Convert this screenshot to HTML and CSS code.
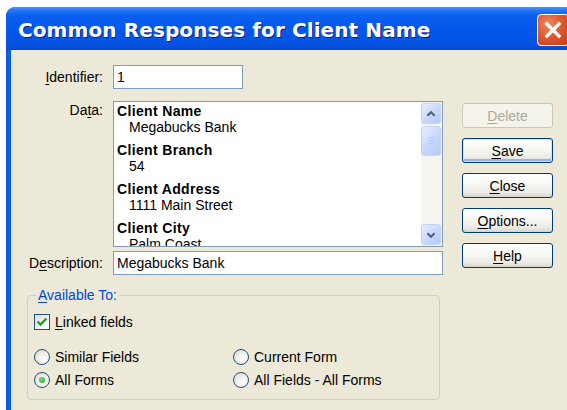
FILE: index.html
```html
<!DOCTYPE html>
<html lang="en">
<head>
<meta charset="utf-8">
<title>Common Responses for Client Name</title>
<link rel="stylesheet" href="styles.css">
</head>
<body>
<div class="window">
  <div class="titlebar">
    <span class="title">Common Responses for Client Name</span>
    <button class="close-box" aria-label="Close">
      <svg viewBox="0 0 32 32" width="32" height="32"><path d="M9.5 9.5 L22.5 22.5 M22.5 9.5 L9.5 22.5" stroke="#fff" stroke-width="3.6" stroke-linecap="square" fill="none"/></svg>
    </button>
  </div>
  <div class="client">
    <div class="top">
      <div class="form">
        <label class="lbl lbl-line"><u>I</u>dentifier:</label>
        <div class="field id-field">1</div>

        <label class="lbl lbl-top">Da<u>t</u>a:</label>
        <div class="listbox">
          <div class="items">
            <div class="item"><div class="key">Client Name</div><div class="val">Megabucks Bank</div></div>
            <div class="item"><div class="key">Client Branch</div><div class="val">54</div></div>
            <div class="item"><div class="key">Client Address</div><div class="val">1111 Main Street</div></div>
            <div class="item"><div class="key">Client City</div><div class="val">Palm Coast</div></div>
          </div>
          <div class="scrollbar">
            <div class="sb-btn">
              <svg viewBox="0 0 20 20" width="20" height="20"><path d="M6 12 L10 8 L14 12" stroke="#4D6185" stroke-width="2.2" fill="none"/></svg>
            </div>
            <div class="sb-thumb">
              <svg viewBox="0 0 20 28" width="20" height="28"><path d="M6.5 10.5 H13.5 M6.5 13.5 H13.5 M6.5 16.5 H13.5" stroke="#B4C7F4" stroke-width="1" fill="none"/></svg>
            </div>
            <div class="sb-track"></div>
            <div class="sb-btn">
              <svg viewBox="0 0 20 20" width="20" height="20"><path d="M6 8 L10 12 L14 8" stroke="#4D6185" stroke-width="2.2" fill="none"/></svg>
            </div>
          </div>
        </div>

        <label class="lbl lbl-line">D<u>e</u>scription:</label>
        <div class="field desc-field">Megabucks Bank</div>
      </div>

      <div class="buttons">
        <button class="btn disabled"><u>D</u>elete</button>
        <button class="btn default"><u>S</u>ave</button>
        <button class="btn"><u>C</u>lose</button>
        <button class="btn"><u>O</u>ptions...</button>
        <button class="btn"><u>H</u>elp</button>
      </div>
    </div>

    <fieldset class="group">
      <legend><u>A</u>vailable To:</legend>
      <div class="check-row">
        <span class="checkbox">
          <svg viewBox="0 0 16 16" width="16" height="16"><path d="M3.5 7.5 L6.5 10.5 L12.5 4.5" stroke="#21A121" stroke-width="2.4" fill="none"/></svg>
        </span>
        <span><u>L</u>inked fields</span>
      </div>
      <div class="radios">
        <div class="opt"><span class="radio"></span><span>Similar Fields</span></div>
        <div class="opt"><span class="radio"></span><span>Current Form</span></div>
        <div class="opt"><span class="radio on"></span><span>All Forms</span></div>
        <div class="opt"><span class="radio"></span><span>All Fields - All Forms</span></div>
      </div>
    </fieldset>
  </div>
</div>
</body>
</html>
```
FILE: styles.css
```css
html, body {
  margin: 0;
  padding: 0;
  background: #fff;
  overflow: hidden;
  width: 567px;
  height: 410px;
}

body {
  font-family: "Liberation Sans", Arial, sans-serif;
  font-size: 14px;
  color: #000;
}

u { text-decoration: underline; text-underline-offset: 2px; }

/* window frame */
.window {
  margin: 7px 0 0 6px;
  width: 600px;
  height: 420px;
  border-radius: 9px 9px 0 0;
  overflow: hidden;
  background: linear-gradient(90deg, #0A4FD8 0, #1160EE 3px, #0A55E2 5px);
  display: flex;
  flex-direction: column;
}

.titlebar {
  height: 43px;
  flex: none;
  display: flex;
  align-items: center;
  padding-left: 12px;
  background: linear-gradient(180deg, #4B95F8 0, #2A79F6 3px, #0C61EF 8px, #0458EC 20px, #0555E6 34px, #0750DA 40px, #0A47C9 43px);
}

.title {
  font-family: "DejaVu Sans", sans-serif;
  font-weight: bold;
  font-size: 20px;
  color: #fff;
  text-shadow: 1px 1px 0 #0A1D8F;
  padding-top: 2px;
  letter-spacing: 0.1px;
}

.close-box {
  margin-left: auto;
  margin-right: 37px;
  margin-top: 2px;
  width: 32px;
  height: 32px;
  padding: 0;
  border: 1px solid #fff;
  border-radius: 4px;
  background: radial-gradient(circle at 35% 30%, #EE8A64 0, #E1592F 45%, #C23A14 100%);
  display: flex;
  align-items: center;
  justify-content: center;
}

.close-box svg { display: block; }

/* dialog body */
.client {
  flex: 1;
  margin-left: 5px;
  background: #ECE9D8;
}

.top {
  display: flex;
  column-gap: 19px;
  padding-top: 15px;
}

.form {
  display: grid;
  grid-template-columns: 92px 330px;
  column-gap: 10px;
  align-items: start;
}

.lbl {
  text-align: right;
  white-space: nowrap;
}

.lbl-line { line-height: 24px; }
.lbl-top { line-height: 16px; padding-top: 1px; }

.field {
  box-sizing: border-box;
  height: 24px;
  border: 1px solid #7F9DB9;
  background: #fff;
  padding-left: 3px;
  line-height: 22px;
}

.id-field { width: 130px; margin-bottom: 12px; }

.listbox {
  box-sizing: border-box;
  height: 146px;
  margin-bottom: 4px;
  border: 1px solid #7F9DB9;
  background: #fff;
  display: flex;
  overflow: hidden;
}

.items {
  flex: 1;
  overflow: hidden;
  padding: 1px 0 0 3px;
}

.item { margin-bottom: 7px; }

.key {
  font-weight: bold;
  line-height: 16px;
  letter-spacing: 0.35px;
}

.val {
  line-height: 16px;
  padding-left: 12px;
}

.scrollbar {
  width: 21px;
  flex: none;
  display: flex;
  flex-direction: column;
  padding: 1px 1px 1px 0;
  background: #F5F4EE;
  box-sizing: border-box;
}

.sb-btn,
.sb-thumb {
  box-sizing: border-box;
  border: 1px solid #C3D3FD;
  border-radius: 3px;
  background: linear-gradient(135deg, #E6EEFF 0, #C7D7FC 55%, #B7CAF8 100%);
  display: flex;
  align-items: center;
  justify-content: center;
}

.sb-btn { height: 21px; }
.sb-btn svg { display: block; }

.sb-thumb {
  height: 30px;
  margin-top: 2px;
}

.sb-track { flex: 1; }

.desc-field { width: 330px; }

/* command buttons */
.buttons {
  display: flex;
  flex-direction: column;
  row-gap: 10px;
  padding-top: 38px;
}

.btn {
  box-sizing: border-box;
  width: 91px;
  height: 25px;
  padding: 0;
  font-family: "Liberation Sans", Arial, sans-serif;
  font-size: 14px;
  color: #000;
  border: 1px solid #003C74;
  border-radius: 3px;
  background: linear-gradient(180deg, #FFFFFF 0, #F8F8F5 40%, #ECEBE5 80%, #D8D4C8 100%);
}

.btn.default {
  box-shadow: inset 0 0 0 1px #CEE2FD, inset 0 -2px 0 1px #98B4EE;
}

.btn.disabled {
  border-color: #C9C7BA;
  background: #F5F4EA;
  color: #ACA899;
}

/* "Available To" group */
.group {
  box-sizing: border-box;
  width: 413px;
  margin: 12px 0 0 16px;
  padding: 11px 6px 11px;
  border: 1px solid #D0D0BF;
  border-radius: 4px;
  min-width: 0;
}

.group legend {
  padding: 0 2px;
  margin-left: 2px;
  color: #0046D5;
  line-height: 16px;
}

.check-row {
  display: flex;
  align-items: center;
  column-gap: 5px;
  height: 16px;
}

.checkbox {
  box-sizing: border-box;
  width: 16px;
  height: 16px;
  border: 1px solid #1C5180;
  background: linear-gradient(135deg, #DCDBD5 0, #F4F4F1 60%, #FFFFFF 100%);
  display: flex;
}

.checkbox svg { display: block; margin: -1px; }

.radios {
  margin-top: 19px;
  display: grid;
  grid-template-columns: 199px auto;
  row-gap: 7px;
}

.opt {
  display: flex;
  align-items: center;
  column-gap: 5px;
  height: 16px;
}

.radio {
  box-sizing: border-box;
  width: 16px;
  height: 16px;
  border: 1px solid #1C5180;
  border-radius: 50%;
  background: radial-gradient(circle at 65% 65%, #FFFFFF 0, #F0EFEA 45%, #D6D3C8 100%);
  display: flex;
  align-items: center;
  justify-content: center;
}

.radio.on::after {
  content: "";
  width: 6px;
  height: 6px;
  border-radius: 50%;
  background: radial-gradient(circle at 40% 40%, #7BE37B 0, #3CB43C 60%, #1E8E1E 100%);
}
```
